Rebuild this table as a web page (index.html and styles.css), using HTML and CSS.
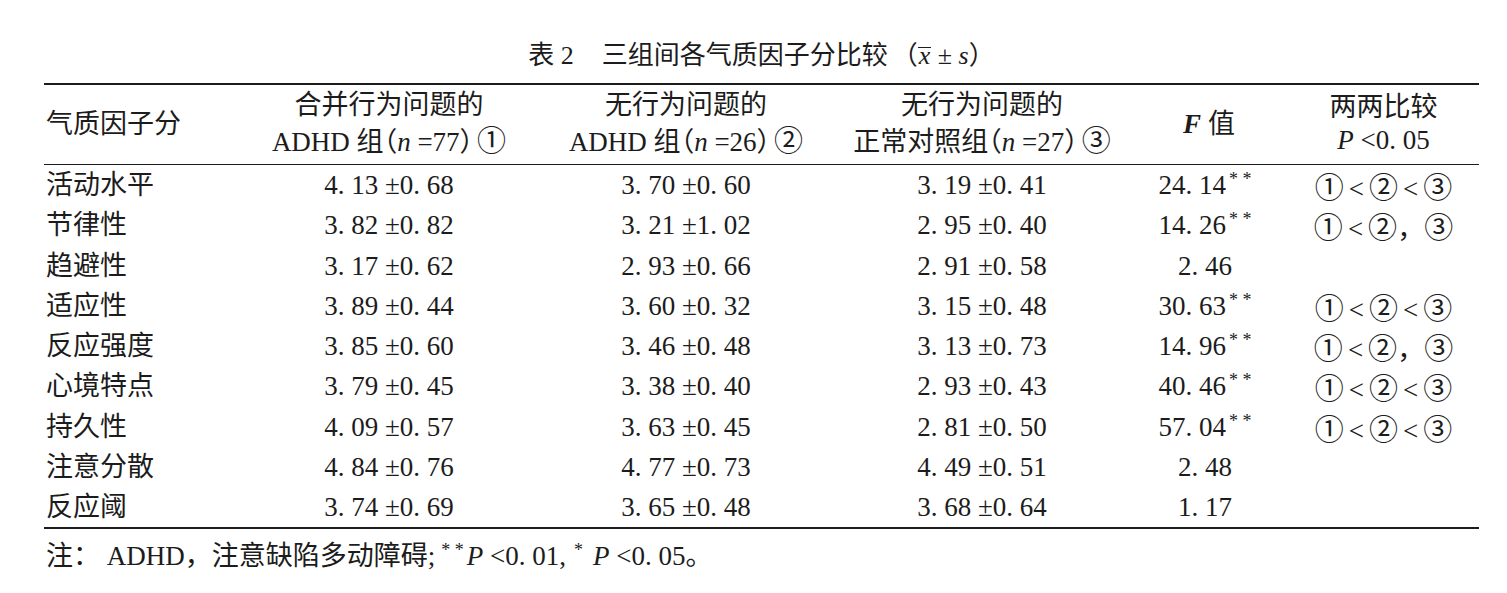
FILE: index.html
```html
<!DOCTYPE html>
<html lang="zh">
<head>
<meta charset="utf-8">
<link rel="stylesheet" href="styles.css">
</head>
<body>
<div class="page">
  <div class="title"><span class="tno">表 2</span>三组间各气质因子分比较<span class="paren">（<span class="xbar">x</span> ± <i>s</i>）</span></div>
  <div class="tbl">
    <div class="hd c1"><div>气质因子分</div></div>
    <div class="hd"><div>合并行为问题的<br>ADHD 组<span class="fp">（</span><i>n</i> =77<span class="fp">）</span><span class="cn">①</span></div></div>
    <div class="hd"><div>无行为问题的<br>ADHD 组<span class="fp">（</span><i>n</i> =26<span class="fp">）</span><span class="cn">②</span></div></div>
    <div class="hd"><div>无行为问题的<br>正常对照组<span class="fp">（</span><i>n</i> =27<span class="fp">）</span><span class="cn">③</span></div></div>
    <div class="hd"><div><b><i>F</i></b> 值</div></div>
    <div class="hd"><div>两两比较<br><i>P</i> &lt;0. 05</div></div>

    <div class="rule"></div>

    <div class="td c1">活动水平</div><div class="td">4. 13 ±0. 68</div><div class="td">3. 70 ±0. 60</div><div class="td">3. 19 ±0. 41</div><div class="td fv">24. 14<sup>* *</sup></div><div class="td cmp"><span class="cn">①</span><span class="lt">&lt;</span><span class="cn">②</span><span class="lt">&lt;</span><span class="cn">③</span></div>
    <div class="td c1">节律性</div><div class="td">3. 82 ±0. 82</div><div class="td">3. 21 ±1. 02</div><div class="td">2. 95 ±0. 40</div><div class="td fv">14. 26<sup>* *</sup></div><div class="td cmp"><span class="cn">①</span><span class="lt">&lt;</span><span class="cn">②</span><span class="cm">，</span><span class="cn">③</span></div>
    <div class="td c1">趋避性</div><div class="td">3. 17 ±0. 62</div><div class="td">2. 93 ±0. 66</div><div class="td">2. 91 ±0. 58</div><div class="td fv">2. 46</div><div class="td cmp"></div>
    <div class="td c1">适应性</div><div class="td">3. 89 ±0. 44</div><div class="td">3. 60 ±0. 32</div><div class="td">3. 15 ±0. 48</div><div class="td fv">30. 63<sup>* *</sup></div><div class="td cmp"><span class="cn">①</span><span class="lt">&lt;</span><span class="cn">②</span><span class="lt">&lt;</span><span class="cn">③</span></div>
    <div class="td c1">反应强度</div><div class="td">3. 85 ±0. 60</div><div class="td">3. 46 ±0. 48</div><div class="td">3. 13 ±0. 73</div><div class="td fv">14. 96<sup>* *</sup></div><div class="td cmp"><span class="cn">①</span><span class="lt">&lt;</span><span class="cn">②</span><span class="cm">，</span><span class="cn">③</span></div>
    <div class="td c1">心境特点</div><div class="td">3. 79 ±0. 45</div><div class="td">3. 38 ±0. 40</div><div class="td">2. 93 ±0. 43</div><div class="td fv">40. 46<sup>* *</sup></div><div class="td cmp"><span class="cn">①</span><span class="lt">&lt;</span><span class="cn">②</span><span class="lt">&lt;</span><span class="cn">③</span></div>
    <div class="td c1">持久性</div><div class="td">4. 09 ±0. 57</div><div class="td">3. 63 ±0. 45</div><div class="td">2. 81 ±0. 50</div><div class="td fv">57. 04<sup>* *</sup></div><div class="td cmp"><span class="cn">①</span><span class="lt">&lt;</span><span class="cn">②</span><span class="lt">&lt;</span><span class="cn">③</span></div>
    <div class="td c1">注意分散</div><div class="td">4. 84 ±0. 76</div><div class="td">4. 77 ±0. 73</div><div class="td">4. 49 ±0. 51</div><div class="td fv">2. 48</div><div class="td cmp"></div>
    <div class="td c1">反应阈</div><div class="td">3. 74 ±0. 69</div><div class="td">3. 65 ±0. 48</div><div class="td">3. 68 ±0. 64</div><div class="td fv">1. 17</div><div class="td cmp"></div>
  </div>
  <div class="note">注： ADHD，注意缺陷多动障碍;<sup class="s1">* *</sup><i>P</i> &lt;0. 01,<sup class="s2">*</sup><i>P</i> &lt;0. 05。</div>
</div>
</body>
</html>
```

FILE: styles.css
```css
html, body {
  margin: 0;
  padding: 0;
  background: #ffffff;
}

body {
  font-family: "Liberation Serif", "Noto Sans CJK SC", serif;
  font-size: 27px;
  color: #1c1c1c;
}

.page {
  width: 1435px;
  margin-left: 44px;
}

.title {
  margin-top: 39px;
  line-height: 33px;
  height: 33px;
  text-align: center;
  font-size: 26px;
}

.tno {
  margin-right: 28px;
}

.paren {
  margin-left: 4px;
}

.xbar {
  font-style: italic;
  display: inline-block;
  line-height: 16px;
  border-top: 1px solid #1c1c1c;
  padding: 0 1px;
}

.tbl {
  margin-top: 11px;
  display: grid;
  grid-template-columns: 196px 298px 296px 296px 158px 191px;
  border-top: 2px solid #1c1c1c;
  border-bottom: 2px solid #1c1c1c;
}

.hd {
  box-sizing: border-box;
  height: 79px;
  padding: 6px 0 7px;
  line-height: 33px;
  text-align: center;
  display: flex;
  align-items: center;
  justify-content: center;
  white-space: nowrap;
  overflow: hidden;
}

.hd.c1 {
  justify-content: flex-start;
  text-align: left;
}

.fp {
  font-family: "Noto Sans CJK SC", sans-serif;
  font-feature-settings: "halt";
}

.rule {
  grid-column: 1 / -1;
  height: 1px;
  background: #1c1c1c;
}

.td {
  height: 40.25px;
  line-height: 40.25px;
  text-align: center;
  white-space: nowrap;
  overflow: hidden;
}

.fv {
  padding-right: 8px;
}

.c1 {
  text-align: left;
  padding-left: 2px;
}

.cn {
  font-family: "Noto Sans CJK SC", sans-serif;
  font-size: 29px;
}

.hd .cn {
  margin-left: 4px;
}

.lt {
  margin: 0 5px;
}

.cm {
  font-family: "Noto Sans CJK SC", sans-serif;
}

sup {
  font-size: 18px;
  line-height: 0;
  vertical-align: 9px;
  margin-left: 3px;
}

.note {
  margin-top: 11px;
  line-height: 33px;
  padding-left: 2px;
  font-size: 27px;
  white-space: nowrap;
}

.note .s1 {
  margin-left: 6px;
  margin-right: 3px;
}

.note .s2 {
  margin-left: 8px;
  margin-right: 10px;
}
```
